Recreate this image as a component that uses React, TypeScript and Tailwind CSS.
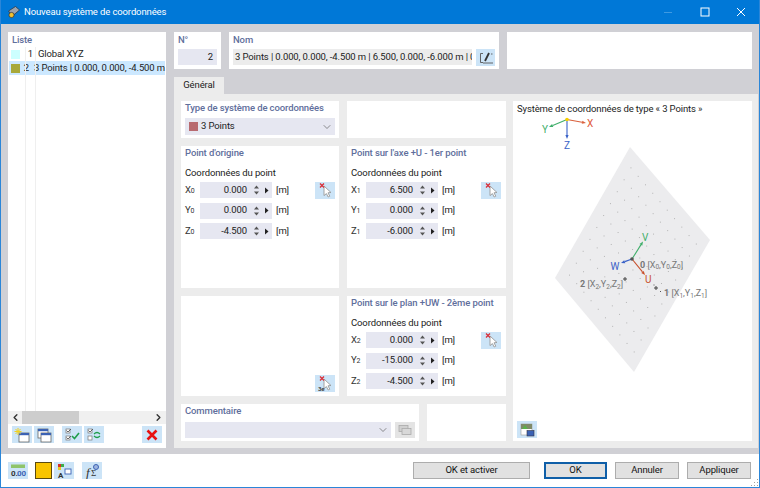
import React from 'react';
import { ChevronDown, ChevronLeft, ChevronRight } from 'lucide-react';

const font = { fontFamily: 'Roboto, "Open Sans", sans-serif' };

const Cursor = ({ tag }: { tag?: boolean }) => (
  <svg width="20" height="17" viewBox="0 0 20 17">
    <path d="M9 4l7 6.5-3 .3 1.8 3.4-1.6.8-1.8-3.4-2.4 2z" fill="#fff" stroke="#9a9a9a" strokeWidth="0.9" />
    <path d="M5 1.5l4 4M9 1.5l-4 4" stroke="#d8303a" strokeWidth="1.3" />
    {tag && <text x="3" y="15.5" fontSize="6" fontWeight="700" fill="#444">3e</text>}
  </svg>
);

const IconBtn = ({ children, className = 'w-5' }: { children: React.ReactNode; className?: string }) => (
  <div className={`${className} h-[17px] bg-[#cce4f7] flex items-center justify-center shrink-0`}>{children}</div>
);

const Win = ({ x = 3, y = 5 }: { x?: number; y?: number }) => (
  <g>
    <rect x={x} y={y} width="10" height="9" fill="#fff" stroke="#666" strokeWidth="0.8" />
    <rect x={x} y={y} width="10" height="2.2" fill="#3b62b4" />
  </g>
);

const Field = ({ sym, sub, value, pick }: { sym: string; sub: string; value: string; pick?: boolean }) => (
  <div className="flex items-center h-[16px] text-[#222]">
    <div className="w-[15px] text-[#333]">
      {sym}
      <span className="text-[7px]">{sub}</span>
    </div>
    <div className="w-[72px] h-[16px] bg-[#e6e7f1] flex items-center justify-end">
      <span className="mr-[6px]">{value}</span>
      <svg width="7" height="12" viewBox="0 0 7 12" className="mr-[4px]">
        <path d="M3.5 1.5L6 4.5H1zM3.5 10.5L1 7.5h5z" fill="#555" />
      </svg>
      <svg width="5" height="7" viewBox="0 0 5 7" className="mr-[3px]">
        <path d="M1 .5L4.5 3.5 1 6.5z" fill="#222" />
      </svg>
    </div>
    <div className="ml-[4px] w-[39px]">[m]</div>
    {pick && (
      <IconBtn>
        <Cursor />
      </IconBtn>
    )}
  </div>
);

const PointBox = ({
  title,
  idx,
  values,
}: {
  title: string;
  idx: string;
  values: string[];
}) => (
  <div className="bg-white px-[4px]">
    <div className="font-medium text-[#5f6f9c] h-[14px] leading-[14px] whitespace-nowrap">{title}</div>
    <div className="text-[#222] mt-[6px] h-[14px] leading-[14px]">Coordonnées du point</div>
    <div className="mt-[2px] flex flex-col gap-[4.5px]">
      <Field sym="X" sub={idx} value={values[0]} pick />
      <Field sym="Y" sub={idx} value={values[1]} />
      <Field sym="Z" sub={idx} value={values[2]} />
    </div>
  </div>
);

const FootBtn = ({ label, className }: { label: string; className: string }) => (
  <div className={`${className} h-[17px] bg-[#e1e1e1] border border-[#adadad] flex items-center justify-center text-[#111]`}>
    {label}
  </div>
);

const dots: [number, number][] = [];
for (let i = 1; i < 11; i++) {
  for (let j = 1; j < 11; j++) {
    const a = i / 11;
    const b = j / 11;
    // bilinear over the four corners of the plane
    const x = (1 - a) * ((1 - b) * 630 + b * 710) + a * ((1 - b) * 555 + b * 634);
    const y = (1 - a) * ((1 - b) * 147 + b * 240) + a * ((1 - b) * 278 + b * 372);
    dots.push([x, y]);
  }
}

const Arrow = ({ x1, y1, x2, y2, color }: { x1: number; y1: number; x2: number; y2: number; color: string }) => {
  const dx = x2 - x1;
  const dy = y2 - y1;
  const l = Math.hypot(dx, dy);
  const ux = dx / l;
  const uy = dy / l;
  const bx = x2 - ux * 4;
  const by = y2 - uy * 4;
  return (
    <g>
      <line x1={x1} y1={y1} x2={bx} y2={by} stroke={color} strokeWidth="1.1" />
      <path d={`M${x2} ${y2}L${bx - uy * 1.6} ${by + ux * 1.6}L${bx + uy * 1.6} ${by - ux * 1.6}z`} fill={color} />
    </g>
  );
};

const Coord = ({ x, y, n }: { x: number; y: number; n: string }) => (
  <text x={x} y={y} fontSize="9" fill="#777" letterSpacing="0">
    <tspan fontWeight="700">{n}</tspan> [X<tspan fontSize="6.5" dy="1.5">{n}</tspan>
    <tspan dy="-1.5">,Y</tspan>
    <tspan fontSize="6.5" dy="1.5">{n}</tspan>
    <tspan dy="-1.5">,Z</tspan>
    <tspan fontSize="6.5" dy="1.5">{n}</tspan>
    <tspan dy="-1.5">]</tspan>
  </text>
);

const Preview = () => (
  <svg viewBox="513 115 239 306" width="239" height="306" className="block" style={font}>
    <path d="M630 147L710 240L634 372L555 278z" fill="#ececee" />
    {dots.map(([x, y], i) => (
      <rect key={i} x={x} y={y} width="1" height="1" fill="#b4b4b4" />
    ))}
    <Arrow x1={567} y1={119.5} x2={586} y2={123} color="#d9603c" />
    <Arrow x1={567} y1={119.5} x2={549} y2={127} color="#3fae6a" />
    <Arrow x1={567} y1={119.5} x2={567} y2={139} color="#3a62c8" />
    <circle cx="567" cy="119.5" r="1.8" fill="#f5d000" />
    <text x="587" y="127" fontSize="10" fill="#e0583a">X</text>
    <text x="542" y="133" fontSize="10" fill="#3fae6a">Y</text>
    <text x="564" y="149" fontSize="10" fill="#3a62c8">Z</text>

    <Arrow x1={632} y1={259} x2={643} y2={241.5} color="#3fae6a" />
    <Arrow x1={632} y1={259} x2={621} y2={263} color="#3a62c8" />
    <Arrow x1={632} y1={259} x2={645} y2={275} color="#c8502c" />
    <circle cx="632" cy="259" r="1.8" fill="#555" />
    <text x="642" y="241" fontSize="10" fill="#3fae6a">V</text>
    <text x="610.5" y="270" fontSize="10" fill="#3a62c8">W</text>
    <text x="645" y="283" fontSize="10" fill="#c8502c">U</text>
    <Coord x={640} y={267.5} n="0" />
    <Coord x={580} y={287} n="2" />
    <Coord x={664} y={296} n="1" />
    <path d="M625 277v4M623 279h4M656 286v4M654 288h4" stroke="#444" strokeWidth="1" />
    <path d="M653.5 284.5h1v1h-1zM660 291h1v1h-1z" fill="#555" />
  </svg>
);

export default function App() {
  return (
    <div
      className="w-[760px] h-[488px] flex flex-col border border-[#2b86d8] border-t-0 bg-white overflow-hidden text-[9.5px] tracking-[-0.12px]"
      style={font}
    >
      {/* Title bar */}
      <div className="h-[24px] bg-[#0078d7] flex items-center text-white shrink-0 -mx-px">
        <svg width="14" height="14" viewBox="0 0 14 14" className="ml-[7px]">
          <path d="M1.5 6l7-4.5 4 3.5-7 6z" fill="#9aa2ae" stroke="#2a3038" strokeWidth="0.7" />
          <circle cx="4.5" cy="10" r="2.6" fill="#f0c030" stroke="#2a3038" strokeWidth="0.7" />
        </svg>
        <span className="ml-[3px]">Nouveau système de coordonnées</span>
        <div className="ml-auto flex items-center">
          <svg width="10" height="10" viewBox="0 0 10 10" className="mr-[27px]">
            <path d="M1 5.5h8" stroke="#3f9ae2" />
          </svg>
          <svg width="10" height="10" viewBox="0 0 10 10" className="mr-[26px]">
            <rect x="1" y="1" width="8" height="8" fill="none" stroke="#fff" />
          </svg>
          <svg width="10" height="10" viewBox="0 0 10 10" className="mr-[14px]">
            <path d="M1 1l8 8M9 1l-8 8" stroke="#fff" strokeWidth="1" />
          </svg>
        </div>
      </div>

      {/* Body */}
      <div className="h-[430px] bg-[#d0d0d5] flex pl-[7px] pt-[8px] shrink-0">
        {/* List */}
        <div className="w-[158px] h-[416px] bg-white flex flex-col shrink-0">
          <div className="h-[15px] px-[4px] font-medium text-[#5f6f9c] leading-[15px]">Liste</div>
          <div className="flex-1 relative text-[#222]">
            <div className="h-[14px] flex items-center">
              <div className="w-[9px] h-[9px] bg-[#ccffff] ml-[3px]" />
              <div className="w-[13px] text-right">1</div>
              <div className="ml-[5px]">Global XYZ</div>
            </div>
            <div className="h-[14px] flex items-center bg-[#cce8ff] whitespace-nowrap mx-px">
              <div className="w-[9px] h-[9px] bg-[#a8a83a] ml-[2px] shrink-0" />
              <div className="w-[13px] text-right">2</div>
              <div className="ml-[5px]">3 Points | 0.000, 0.000, -4.500 m</div>
            </div>
            <div className="absolute top-0 bottom-0 left-[17px] w-px bg-[#efefef]" />
            <div className="absolute top-0 bottom-0 left-[27px] w-px bg-[#efefef]" />
          </div>
          <div className="h-[13px] bg-[#f0f0f0] flex items-center text-[#333]">
            <ChevronLeft size={11} strokeWidth={3} className="mx-[1.5px]" />
            <div className="w-[57px] h-full bg-[#cdcdcd]" />
            <ChevronRight size={11} strokeWidth={3} className="ml-auto mr-[2px]" />
          </div>
          <div className="h-[24px] flex items-center pl-[4px] pb-[3px]">
            <IconBtn>
              <svg width="18" height="16" viewBox="0 0 18 16">
                <Win x={6} y={6} />
                <path d="M5 1v7M1.5 4.5h7M2.5 2l5 5M7.5 2l-5 5" stroke="#f2d21f" strokeWidth="1" />
              </svg>
            </IconBtn>
            <IconBtn className="w-5 ml-[2px]">
              <svg width="18" height="16" viewBox="0 0 18 16">
                <Win x={3} y={2} />
                <Win x={6} y={6} />
              </svg>
            </IconBtn>
            <IconBtn className="w-5 ml-[8px]">
              <svg width="18" height="16" viewBox="0 0 18 16">
                <rect x="3" y="2" width="4" height="4" fill="#fff" stroke="#777" strokeWidth="0.7" />
                <rect x="3" y="9" width="4" height="4" fill="#fff" stroke="#777" strokeWidth="0.7" />
                <path d="M3.5 3.5l1.5 1.5 3-3M3.5 10.5l1.5 1.5 3-3" stroke="#444" strokeWidth="0.8" fill="none" />
                <path d="M9 9l2.5 2.5L16 6" stroke="#1f9e4a" strokeWidth="1.6" fill="none" />
              </svg>
            </IconBtn>
            <IconBtn className="w-5 ml-[2px]">
              <svg width="18" height="16" viewBox="0 0 18 16">
                <rect x="3" y="2" width="4" height="4" fill="#fff" stroke="#777" strokeWidth="0.7" />
                <rect x="3" y="9" width="4" height="4" fill="#fff" stroke="#777" strokeWidth="0.7" />
                <path d="M3.5 3.5l1.5 1.5 3-3" stroke="#444" strokeWidth="0.8" fill="none" />
                <path d="M9 7c2-2 4-2 6 0M15 9c-2 2-4 2-6 0" stroke="#1f9e4a" strokeWidth="1.2" fill="none" />
              </svg>
            </IconBtn>
            <IconBtn className="w-5 ml-[38px]">
              <svg width="12" height="12" viewBox="0 0 12 12">
                <path d="M1.5 1.5l9 9M10.5 1.5l-9 9" stroke="#e81010" strokeWidth="2.6" />
              </svg>
            </IconBtn>
          </div>
        </div>

        {/* Right column */}
        <div className="ml-[8px] w-[584px] flex flex-col shrink-0">
          <div className="flex h-[37px] gap-[8px]">
            <div className="w-[47px] bg-white px-[4px]">
              <div className="font-medium text-[#5f6f9c] h-[15px] leading-[15px]">N°</div>
              <div className="mt-[2px] h-[16px] bg-[#e6e7f1] text-[#222] text-right pr-[4px] leading-[16px]">2</div>
            </div>
            <div className="w-[270px] bg-white px-[4px]">
              <div className="font-medium text-[#5f6f9c] h-[15px] leading-[15px]">Nom</div>
              <div className="mt-[2px] flex gap-[4px]">
                <div className="w-[239px] h-[16px] bg-[#ececec] text-[#222] leading-[16px] pl-[2px] overflow-hidden whitespace-nowrap">
                  3 Points | 0.000, 0.000, -4.500 m | 6.500, 0.000, -6.000 m | 0.000, -15.000
                </div>
                <IconBtn className="w-[19px]">
                  <svg width="16" height="14" viewBox="0 0 16 14">
                    <path d="M5 2.5H2.5v9H5M5 12h10" stroke="#555" strokeWidth="0.9" fill="none" />
                    <path d="M11 2L7 10" stroke="#333" strokeWidth="1.8" />
                    <path d="M13 3h1.5" stroke="#555" strokeWidth="0.9" />
                  </svg>
                </IconBtn>
              </div>
            </div>
            <div className="w-[245px] bg-white" />
          </div>

          {/* Tab strip */}
          <div className="mt-[8px] w-[50px] h-[17px] bg-[#ececec] text-[#222] flex items-center justify-center">Général</div>

          {/* Tab page */}
          <div className="w-[584px] h-[354px] bg-[#ececec] pl-[7px] pt-[7px] flex gap-[7px]">
            <div className="w-[325px] grid grid-cols-[158px_159px] grid-rows-[37px_142px_100px_37px] gap-[8px]">
              <div className="bg-white px-[4px]">
                <div className="font-medium text-[#5f6f9c] h-[14px] leading-[14px] whitespace-nowrap">Type de système de coordonnées</div>
                <div className="mt-[3px] h-[17px] bg-[#e6e7f1] flex items-center pl-[4px] pr-[2px] text-[#222]">
                  <div className="w-[9px] h-[9px] bg-[#b86a70]" />
                  <span className="ml-[3px]">3 Points</span>
                  <ChevronDown size={12} strokeWidth={1.3} className="ml-auto text-[#555]" />
                </div>
              </div>
              <div className="bg-white" />
              <PointBox title="Point d'origine" idx="0" values={['0.000', '0.000', '-4.500']} />
              <PointBox title="Point sur l'axe +U - 1er point" idx="1" values={['6.500', '0.000', '-6.000']} />
              <div className="bg-white flex items-end justify-end pr-[4px] pb-[4px]">
                <IconBtn>
                  <Cursor tag />
                </IconBtn>
              </div>
              <PointBox title="Point sur le plan +UW - 2ème point" idx="2" values={['0.000', '-15.000', '-4.500']} />
              <div className="col-span-2 flex gap-[8px]">
                <div className="w-[238px] bg-white px-[4px]">
                  <div className="font-medium text-[#5f6f9c] h-[14px] leading-[14px]">Commentaire</div>
                  <div className="mt-[4px] flex gap-[4px]">
                    <div className="w-[206px] h-[16px] bg-[#e6e7f1] flex items-center justify-end pr-[2px]">
                      <ChevronDown size={12} strokeWidth={1.3} className="text-[#555]" />
                    </div>
                    <div className="w-5 h-[16px] bg-[#e4e4e4] flex items-center justify-center">
                      <svg width="16" height="12" viewBox="0 0 16 12">
                        <rect x="2" y="1.5" width="9" height="6" fill="#d0d0d0" stroke="#aaa" strokeWidth="0.8" />
                        <rect x="5" y="4.5" width="9" height="6" fill="#d8d8d8" stroke="#aaa" strokeWidth="0.8" />
                      </svg>
                    </div>
                  </div>
                </div>
                <div className="w-[79px] bg-white" />
              </div>
            </div>

            {/* Diagram panel */}
            <div className="w-[239px] h-[340px] bg-white flex flex-col">
              <div className="h-[14px] pl-[4px] text-[#222] leading-[16px] whitespace-nowrap">
                Système de coordonnées de type « 3 Points »
              </div>
              <Preview />
              <div className="pl-[4px]">
                <IconBtn>
                  <svg width="18" height="16" viewBox="0 0 18 16">
                    <rect x="3" y="2" width="11" height="11" fill="#fff" stroke="#999" strokeWidth="0.6" />
                    <rect x="3" y="2" width="11" height="5" fill="#7f8a68" />
                    <path d="M4 7l3-4 3 4z" fill="#5ab04a" />
                    <rect x="9" y="8.5" width="7" height="5.5" fill="#3b62b4" stroke="#334" strokeWidth="0.6" />
                  </svg>
                </IconBtn>
              </div>
            </div>
          </div>
        </div>
      </div>

      {/* Footer */}
      <div className="flex-1 flex items-start pt-[8px] pl-[7px] relative">
        <IconBtn>
          <svg width="18" height="16" viewBox="0 0 18 16">
            <rect x="2" y="1.5" width="14" height="3.5" fill="#8fc46a" />
            <text x="2" y="13" fontSize="8" fontWeight="700" fill="#333">0.</text>
            <text x="8" y="13" fontSize="8" fontWeight="700" fill="#3b62b4">00</text>
          </svg>
        </IconBtn>
        <div className="ml-[7px] w-[17px] h-[17px] bg-[#f8c400] border border-[#5a4a10]" />
        <IconBtn className="w-5 ml-[2px]">
          <svg width="18" height="16" viewBox="0 0 18 16">
            <rect x="3" y="1" width="3" height="3" fill="#d8302a" />
            <rect x="6" y="1" width="3" height="3" fill="#3fae4a" />
            <rect x="3" y="4" width="3" height="3" fill="#e8c820" />
            <text x="3" y="14.5" fontSize="8" fontWeight="700" fill="#333">A</text>
            <rect x="10" y="6" width="6" height="5" fill="#fff" stroke="#3b62b4" strokeWidth="0.9" />
          </svg>
        </IconBtn>
        <IconBtn className="w-5 ml-[8px]">
          <svg width="18" height="16" viewBox="0 0 18 16">
            <text x="3" y="14" fontSize="13" fontStyle="italic" fontFamily="Liberation Serif, serif" fill="#333">f</text>
            <text x="8" y="13" fontSize="9" fontFamily="Liberation Serif, serif" fill="#333">Σ</text>
            <circle cx="13" cy="4" r="2.5" fill="#9db4e0" stroke="#3b62b4" strokeWidth="1" />
          </svg>
        </IconBtn>
        <FootBtn label="OK et activer" className="ml-[311px] w-[117px]" />
        <div className="ml-[14px] w-[63px] h-[17px] bg-[#e1e1e1] border-2 border-[#0f5fa8] flex items-center justify-center text-[#111]">OK</div>
        <FootBtn label="Annuler" className="ml-[8px] w-[64px]" />
        <FootBtn label="Appliquer" className="ml-[8px] w-[64px]" />
        <svg width="9" height="9" viewBox="0 0 9 9" className="absolute right-0 bottom-0">
          <path d="M7 1h1v1H7zM4 4h1v1H4zM7 4h1v1H7zM1 7h1v1H1zM4 7h1v1H4zM7 7h1v1H7z" fill="#a0a0a0" />
        </svg>
      </div>
    </div>
  );
}
